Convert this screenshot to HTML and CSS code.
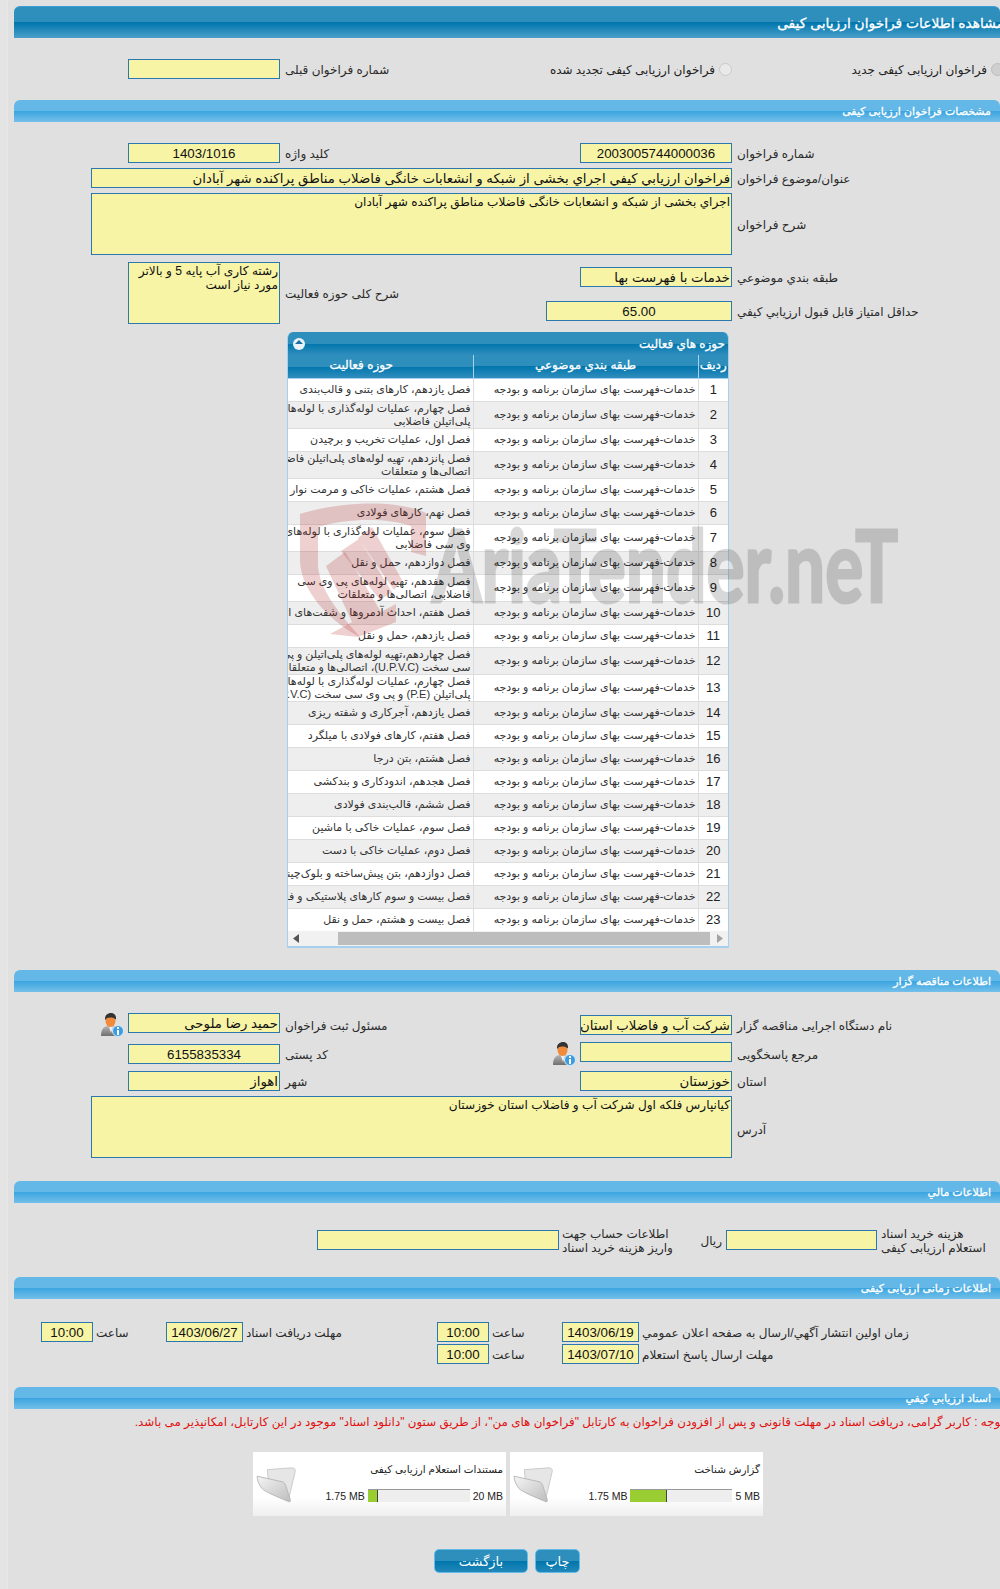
FILE: index.html
```html
<!DOCTYPE html>
<html lang="fa">
<head>
<meta charset="utf-8">
<title>مشاهده اطلاعات فراخوان ارزیابی کیفی</title>
<link rel="stylesheet" href="styles.css">
</head>
<body>
<main class="page">
  <h1 class="bar bar-main"><span class="bar-title">مشاهده اطلاعات فراخوان ارزیابی کیفی</span></h1>

  <section class="form form-top">
    <div class="field in-l"></div>
    <div class="label lb-l">شماره فراخوان قبلی</div>
    <div class="radio-line rad-mid"><span class="radio"></span><span>فراخوان ارزیابی کیفی تجدید شده</span></div>
    <div class="radio-line rad-right"><span class="radio radio-on"></span><span>فراخوان ارزیابی کیفی جدید</span></div>
  </section>

  <h2 class="bar bar-sub"><span>مشخصات فراخوان ارزیابی کیفی</span></h2>

  <section class="form form-spec">
    <div class="field in-l center r1">1403/1016</div>
    <div class="label lb-l r1">کلید واژه</div>
    <div class="field in-r center r1">2003005744000036</div>
    <div class="label lb-r r1">شماره فراخوان</div>

    <div class="field wide r2">فراخوان ارزيابي كيفي اجراي بخشی از شبکه و انشعابات خانگی فاضلاب مناطق پراکنده شهر آبادان</div>
    <div class="label lb-r r2">عنوان/موضوع فراخوان</div>

    <div class="field area wide r3">اجراي بخشی از شبکه و انشعابات خانگی فاضلاب مناطق پراکنده شهر آبادان</div>
    <div class="label lb-r r3">شرح فراخوان</div>

    <div class="field area area-small in-l r45">رشته کاری آب پایه 5 و بالاتر<br>مورد نیاز است</div>
    <div class="label lb-l r45 label-low">شرح کلی حوزه فعالیت</div>
    <div class="field in-r r4 push7">خدمات با فهرست بها</div>
    <div class="label lb-r r4 push7">طبقه بندي موضوعي</div>
    <div class="field in-mid center r5">65.00</div>
    <div class="label lb-r r5">حداقل امتياز قابل قبول ارزيابي كيفي</div>
  </section>

  <section class="panel">
    <div class="panel-head">
      <span class="panel-toggle"></span>
      <span class="panel-title">حوزه هاي فعاليت</span>
    </div>
    <div class="table-wrap">
      <table class="grid-table">
        <colgroup><col class="c-num"><col class="c-cat"><col class="c-act"></colgroup>
        <thead><tr><th>رديف</th><th>طبقه بندي موضوعي</th><th>حوزه فعاليت</th></tr></thead>
        <tbody>
          <tr><td class="n">1</td><td>خدمات-فهرست بهای سازمان برنامه و بودجه</td><td>فصل یازدهم، کارهای بتنی و قالب‌بندی</td></tr>
          <tr class="tall"><td class="n">2</td><td>خدمات-فهرست بهای سازمان برنامه و بودجه</td><td>فصل چهارم، عملیات لوله‌گذاری با لوله‌های<br>پلی‌اتیلن فاضلابی</td></tr>
          <tr><td class="n">3</td><td>خدمات-فهرست بهای سازمان برنامه و بودجه</td><td>فصل اول، عملیات تخریب و برچیدن</td></tr>
          <tr class="tall"><td class="n">4</td><td>خدمات-فهرست بهای سازمان برنامه و بودجه</td><td>فصل پانزدهم، تهیه لوله‌های پلی‌اتیلن فاضلابی،<br>اتصالی‌ها و متعلقات</td></tr>
          <tr><td class="n">5</td><td>خدمات-فهرست بهای سازمان برنامه و بودجه</td><td>فصل هشتم، عملیات خاکی و مرمت نوار</td></tr>
          <tr><td class="n">6</td><td>خدمات-فهرست بهای سازمان برنامه و بودجه</td><td>فصل نهم، کارهای فولادی</td></tr>
          <tr class="tall"><td class="n">7</td><td>خدمات-فهرست بهای سازمان برنامه و بودجه</td><td>فصل سوم، عملیات لوله‌گذاری با لوله‌های پی<br>وی سی فاضلابی</td></tr>
          <tr><td class="n">8</td><td>خدمات-فهرست بهای سازمان برنامه و بودجه</td><td>فصل دوازدهم، حمل و نقل</td></tr>
          <tr class="tall"><td class="n">9</td><td>خدمات-فهرست بهای سازمان برنامه و بودجه</td><td>فصل هفدهم، تهیه لوله‌های پی وی سی<br>فاضلابی، اتصالی‌ها و متعلقات</td></tr>
          <tr><td class="n">10</td><td>خدمات-فهرست بهای سازمان برنامه و بودجه</td><td>فصل هفتم، احداث آدمروها و شفت‌های انتقال</td></tr>
          <tr><td class="n">11</td><td>خدمات-فهرست بهای سازمان برنامه و بودجه</td><td>فصل یازدهم، حمل و نقل</td></tr>
          <tr class="tall"><td class="n">12</td><td>خدمات-فهرست بهای سازمان برنامه و بودجه</td><td>فصل چهاردهم،تهیه لوله‌های پلی‌اتیلن و پی وی<br>سی سخت (U.P.V.C)، اتصالی‌ها و متعلقات</td></tr>
          <tr class="tall"><td class="n">13</td><td>خدمات-فهرست بهای سازمان برنامه و بودجه</td><td>فصل چهارم، عملیات لوله‌گذاری با لوله‌های<br>پلی‌اتیلن (P.E) و پی وی سی سخت (U.P.V.C)</td></tr>
          <tr><td class="n">14</td><td>خدمات-فهرست بهای سازمان برنامه و بودجه</td><td>فصل یازدهم، آجرکاری و شفته ریزی</td></tr>
          <tr><td class="n">15</td><td>خدمات-فهرست بهای سازمان برنامه و بودجه</td><td>فصل هفتم، کارهای فولادی با میلگرد</td></tr>
          <tr><td class="n">16</td><td>خدمات-فهرست بهای سازمان برنامه و بودجه</td><td>فصل هشتم، بتن درجا</td></tr>
          <tr><td class="n">17</td><td>خدمات-فهرست بهای سازمان برنامه و بودجه</td><td>فصل هجدهم، اندودکاری و بندکشی</td></tr>
          <tr><td class="n">18</td><td>خدمات-فهرست بهای سازمان برنامه و بودجه</td><td>فصل ششم، قالب‌بندی فولادی</td></tr>
          <tr><td class="n">19</td><td>خدمات-فهرست بهای سازمان برنامه و بودجه</td><td>فصل سوم، عملیات خاکی با ماشین</td></tr>
          <tr><td class="n">20</td><td>خدمات-فهرست بهای سازمان برنامه و بودجه</td><td>فصل دوم، عملیات خاکی با دست</td></tr>
          <tr><td class="n">21</td><td>خدمات-فهرست بهای سازمان برنامه و بودجه</td><td>فصل دوازدهم، بتن پیش‌ساخته و بلوک‌چینی</td></tr>
          <tr><td class="n">22</td><td>خدمات-فهرست بهای سازمان برنامه و بودجه</td><td>فصل بیست و سوم کارهای پلاستیکی و فلزی</td></tr>
          <tr><td class="n">23</td><td>خدمات-فهرست بهای سازمان برنامه و بودجه</td><td>فصل بیست و هشتم، حمل و نقل</td></tr>
        </tbody>
      </table>
    </div>
    <div class="hscroll">
      <svg class="arrow" width="7" height="9" viewBox="0 0 7 9"><path d="M6 0v9L0 4.500z" fill="#555"/></svg>
      <span class="thumb"></span>
      <svg class="arrow" width="7" height="9" viewBox="0 0 7 9"><path d="M1 0v9l6-4.500z" fill="#a3a3a3"/></svg>
    </div>
  </section>

  <h2 class="bar bar-sub bar-gap"><span>اطلاعات مناقصه گزار</span></h2>

  <section class="form form-org">
    <svg class="user ic-l r1" width="24" height="24" viewBox="0 0 24 24"><use href="#user-info"/></svg>
    <div class="field in-l r1">حمید رضا ملوحی</div>
    <div class="label lb-l r1 label-nudge">مسئول ثبت فراخوان</div>
    <div class="field in-r r1 push2">شرکت آب و فاضلاب استان</div>
    <div class="label lb-r r1 label-nudge">نام دستگاه اجرایی مناقصه گزار</div>

    <div class="field in-l center r2 push2">6155835334</div>
    <div class="label lb-l r2 label-nudge">کد پستی</div>
    <svg class="user ic-r r2" width="24" height="24" viewBox="0 0 24 24"><use href="#user-info"/></svg>
    <div class="field in-r r2"></div>
    <div class="label lb-r r2 label-nudge">مرجع پاسخگویی</div>

    <div class="field in-l r3">اهواز</div>
    <div class="label lb-l r3">شهر</div>
    <div class="field in-r r3">خوزستان</div>
    <div class="label lb-r r3">استان</div>

    <div class="field area wide r4">کیانپارس فلکه اول شرکت آب و فاضلاب استان خوزستان</div>
    <div class="label lb-r r4">آدرس</div>
  </section>

  <h2 class="bar bar-sub bar-gap-21"><span>اطلاعات مالي</span></h2>

  <section class="form-fin">
    <div class="field fin-account"></div>
    <div class="fin-mid">
      <div class="label two-line">اطلاعات حساب جهت<br>واریز هزینه خرید اسناد</div>
      <div class="label rial">ریال</div>
    </div>
    <div class="field fin-cost"></div>
    <div class="label two-line fin-label">هزینه خرید اسناد<br>استعلام ارزیابی کیفی</div>
  </section>

  <h2 class="bar bar-sub bar-gap-27"><span>اطلاعات زمانی ارزیابی کیفی</span></h2>

  <section class="form-time">
    <div class="field center time">10:00</div>
    <div class="label">ساعت</div>
    <div class="field center date">1403/06/27</div>
    <div class="label">مهلت دریافت اسناد</div>
    <div class="field center time">10:00</div>
    <div class="label">ساعت</div>
    <div class="field center date">1403/06/19</div>
    <div class="label">زمان اولین انتشار آگهي/ارسال به صفحه اعلان عمومي</div>

    <div class="t-skip"></div>
    <div class="field center time">10:00</div>
    <div class="label">ساعت</div>
    <div class="field center date">1403/07/10</div>
    <div class="label">مهلت ارسال پاسخ استعلام</div>
  </section>

  <h2 class="bar bar-sub bar-gap-23"><span>اسناد ارزیابي کیفي</span></h2>

  <p class="notice">توجه : کاربر گرامی، دریافت اسناد در مهلت قانونی و پس از افزودن فراخوان به کارتابل "فراخوان های من"، از طریق ستون "دانلود اسناد" موجود در این کارتابل، امکانپذیر می باشد.</p>

  <section class="cards">
    <article class="card">
      <div class="card-body">
        <div class="card-title">گزارش شناخت</div>
        <div class="meter-line">
          <span class="mb">5 MB</span>
          <span class="meter"><span class="meter-fill" style="width:37px"></span></span>
          <span class="mb">1.75 MB</span>
        </div>
      </div>
      <svg class="folder" width="41" height="37" viewBox="0 0 44 40"><use href="#folder"/></svg>
    </article>
    <article class="card">
      <div class="card-body">
        <div class="card-title">مستندات استعلام ارزیابی کیفی</div>
        <div class="meter-line">
          <span class="mb">20 MB</span>
          <span class="meter"><span class="meter-fill" style="width:10px"></span></span>
          <span class="mb">1.75 MB</span>
        </div>
      </div>
      <svg class="folder" width="41" height="37" viewBox="0 0 44 40"><use href="#folder"/></svg>
    </article>
  </section>

  <div class="actions">
    <a class="btn btn-back">بازگشت</a>
    <a class="btn btn-print">چاپ</a>
  </div>
</main>

<svg class="watermark" width="1000" height="170" viewBox="0 490 1000 170" aria-hidden="true">
  <path class="wm-red" d="M300 514C335 503 392 498 426 513L426 556 411 552 411 526C384 517 345 519 318 527L318 566C320 592 342 616 360 637 330 622 300 590 300 560Z"/>
  <path class="wm-red" d="M326 566L345 552 381 612 396 604 396 622 358 637 330 634 352 622Z"/>
  <path class="wm-red" d="M341 551L359 539 392 592 380 600Z"/>
  <path class="wm-red" d="M358 538L372 527 402 580 394 590Z"/>
  <text class="wm-text" x="432" y="602" textLength="466" lengthAdjust="spacingAndGlyphs">AriaTender.neT</text>
</svg>

<svg class="defs" width="0" height="0" aria-hidden="true">
  <defs>
    <linearGradient id="suit" x1="0" y1="0" x2="0" y2="1"><stop offset="0" stop-color="#b5b5b5"/><stop offset="1" stop-color="#6f6f6f"/></linearGradient>
    <linearGradient id="foldg" x1="0" y1="0" x2="1" y2="1"><stop offset="0" stop-color="#f5f5f5"/><stop offset="1" stop-color="#bdbdbd"/></linearGradient>
    <symbol id="user-info" viewBox="0 0 24 24">
      <path d="M1 23c0-6 2-9 6-10l4 1 4-1c3 1 5 4 5 10z" fill="url(#suit)"/>
      <path d="M9 14l2 6 2-6z" fill="#eee"/>
      <ellipse cx="10.500" cy="8" rx="5" ry="6" fill="#f28a3c"/>
      <path d="M5 7C4.500 2 8 0 11 0s5.500 2 5 6.500C14 4 9 4 7 5z" fill="#333"/>
      <circle cx="18" cy="18" r="5.500" fill="#3d9be0" stroke="#d7ecfb"/>
      <rect x="17" y="17" width="2" height="5" fill="#fff"/>
      <rect x="17" y="14" width="2" height="2" fill="#fff"/>
    </symbol>
    <symbol id="folder" viewBox="0 0 44 40">
      <path d="M12 4L38 2c4 0 5 2 4 5L35 36 14 22z" fill="#e6e6e6" stroke="#c8c8c8"/>
      <path d="M1 11L28 17c2 0 3 2 4 4l5 16c0 2-1 2-3 1C22 33 10 28 6 24 3 20 1 15 1 11z" fill="url(#foldg)" stroke="#b5b5b5"/>
    </symbol>
  </defs>
</svg>
</body>
</html>
```

FILE: styles.css
```css
html, body { margin: 0; padding: 0; height: 1589px; overflow: hidden; }
body {
  background: #e4e4e4;
  font-family: "Liberation Sans", "DejaVu Sans", sans-serif;
  font-size: 12px;
  color: #222;
  position: relative;
}
.page {
  margin-left: 7px;
  padding: 6px 0 0 6px;
  height: 1583px;
  background: #e0e0e0;
  border-left: 1px solid #e8e8e8;
  overflow: hidden;
}
.defs { position: absolute; }

/* header bars */
.bar {
  margin: 0;
  direction: rtl;
  color: #fff;
  font-weight: normal;
  -webkit-text-stroke: 0.3px #fff;
  border-top-left-radius: 6px;
  border-top-right-radius: 6px;
}
.bar-main {
  height: 32px;
  line-height: 34px;
  font-size: 13.800px;
  background: linear-gradient(#2e8fbd 0, #2e8fbd 50%, #0076ad 50%, #4a9fc9 100%);
  border-top: 1px solid #3b9ed4;
  box-sizing: border-box;
}
.bar-title { margin-right: -4px; white-space: nowrap; }
.bar-sub {
  height: 22px;
  line-height: 23px;
  font-size: 11px;
  padding-right: 9px;
  background: linear-gradient(#63b8e8 0, #63b8e8 50%, #3aa4df 50%, #74c0ea 100%);
  margin-top: 21px;
}
.bar-gap { margin-top: 22px; }
.bar-gap-21 { margin-top: 21px; }
.bar-gap-23 { margin-top: 23px; }
.bar-gap-27 { margin-top: 27px; }

/* form grid */
.form {
  display: grid;
  grid-template-columns: 77px 37px 152px 266px 34px 152px 268px;
  margin-top: 21px;
}
.form-top { grid-template-rows: 20px; }
.form-spec { grid-template-rows: 20px 20px 62px 36px 20px; row-gap: 5px; }
.form-org { grid-template-rows: 22px 22px 20px 62px; row-gap: 7px; }
.form-org .r4 { margin-top: -2px; height: 62px; }

.r1 { grid-row: 1; }
.r2 { grid-row: 2; }
.r3 { grid-row: 3; }
.r4 { grid-row: 4; }
.r5 { grid-row: 5; }
.r45 { grid-row: 4 / 6; }
.in-l { grid-column: 3; }
.lb-l { grid-column: 4; }
.in-r { grid-column: 6; }
.lb-r { grid-column: 7; }
.wide { grid-column: 2 / 7; }
.in-mid { grid-column: 5 / 7; }
.ic-l { grid-column: 2; justify-self: end; margin: 0 4px 0 0; }
.ic-r { grid-column: 5; justify-self: end; margin: 0 4px 0 0; }

.field {
  box-sizing: border-box;
  height: 20px;
  background: #f7f4a6;
  border: 1px solid #2b78ae;
  direction: rtl;
  padding: 0 1px;
  font-size: 13.300px;
  line-height: 19px;
  color: #111;
  white-space: nowrap;
  overflow: hidden;
  align-self: start;
}
.center { text-align: center; }
.area { height: 62px; white-space: normal; font-size: 12.100px; line-height: 14px; padding-top: 1px; }
.area-small { margin-top: 2px; }
.push2 { margin-top: 2px; }
.push7 { margin-top: 7px; }

.label {
  direction: rtl;
  text-align: left;
  white-space: nowrap;
  padding-left: 5px;
  padding-top: 1px;
  line-height: 20px;
  color: #2b2b2b;
  align-self: start;
}
.form .field + .label { justify-self: start; padding-left: 0; margin-left: 5px; }
.r3.label { align-self: center; }
.label-low { align-self: end; margin-bottom: 17px; }
.label-nudge { margin-top: 2px; }
.form-org .r4.label { align-self: center; margin-top: 0; height: auto; }

/* radios */
.radio-line {
  display: flex;
  direction: rtl;
  align-items: center;
  gap: 4px;
  white-space: nowrap;
  height: 20px;
  grid-row: 1;
  padding-top: 1px;
}
.rad-mid { grid-column: 5 / 7; }
.rad-right { grid-column: 7; margin-right: -4px; }
.radio {
  width: 11px;
  height: 11px;
  flex: none;
  border-radius: 50%;
  border: 1px solid #c9c9c9;
  background: #e9e9e9;
  margin-top: -2px;
}
.radio-on { background: #cfcfcf; border-color: #bdbdbd; }

/* panel */
.panel {
  width: 442px;
  margin: 11px 0 0 273px;
  box-sizing: border-box;
  height: 616px;
  border-left: 1px solid #a7d0ee;
  border-right: 1px solid #a7d0ee;
  border-bottom: 2px solid #a7d0ee;
  border-top-left-radius: 6px;
  border-top-right-radius: 6px;
  overflow: hidden;
}
.panel-head {
  height: 23px;
  display: flex;
  justify-content: space-between;
  align-items: center;
  padding: 0 3px 0 5px;
  background: linear-gradient(#2e8fbd 0, #2e8fbd 50%, #0076ad 50%, #2f8dbd 100%);
  color: #fff;
  -webkit-text-stroke: 0.3px #fff;
}
.panel-title { direction: rtl; }
.panel-toggle {
  width: 12px;
  height: 12px;
  border-radius: 50%;
  background: #e8f3f9;
  position: relative;
}
.panel-toggle::after {
  content: "";
  position: absolute;
  left: 2px;
  top: 2px;
  border: 4px solid transparent;
  border-top: 0;
  border-bottom: 4px solid #1c6f9f;
}
.table-wrap { height: 576px; overflow: hidden; direction: rtl; background: #fff; }
.grid-table {
  width: 478px;
  border-collapse: collapse;
  table-layout: fixed;
  direction: rtl;
}
.c-num { width: 30px; }
.c-cat { width: 225px; }
.c-act { width: 223px; }
.grid-table th {
  height: 23px;
  box-sizing: border-box;
  padding: 0 0 3px;
  color: #fff;
  font-size: 12px;
  font-weight: normal;
  -webkit-text-stroke: 0.3px #fff;
  background: linear-gradient(#2e8fbd 0, #2e8fbd 50%, #0076ad 50%, #2f8dbd 100%);
  border-left: 1px solid #a7d0ee;
  border-bottom: 1px solid #a7d0ee;
  white-space: nowrap;
}
.grid-table th:last-child { border-left: 0; }
.grid-table td {
  height: 23px;
  box-sizing: border-box;
  padding: 0 2px;
  font-size: 11px;
  line-height: 13px;
  white-space: nowrap;
  overflow: hidden;
  text-align: right;
  color: #333;
  border-left: 1px solid #ddd;
  border-bottom: 1px solid #ddd;
}
.grid-table td:last-child { border-left: 0; }
.grid-table td.n { text-align: center; font-size: 13px; color: #222; }
.grid-table tr.tall td { height: 27px; }
.grid-table tbody tr:nth-child(even) td { background: #eee; }
.hscroll {
  height: 15px;
  display: flex;
  align-items: center;
  justify-content: space-between;
  background: #f1f1f1;
  padding: 0 5px;
}
.thumb { width: 372px; height: 13px; background: #bdbdbd; margin-left: 33px; margin-right: 1px; }

/* finance */
.form-fin {
  display: grid;
  grid-template-columns: 303px 242px 167px 151px 1fr;
  margin-top: 27px;
  height: 20px;
}
.form-fin .field { grid-row: 1; }
.fin-account { grid-column: 2; }
.fin-cost { grid-column: 4; }
.fin-mid { grid-column: 3; display: flex; justify-content: space-between; padding-right: 4px; }
.two-line { line-height: 14px; margin-top: -4px; padding-left: 3px; }
.fin-mid .two-line { padding-left: 3px; }
.rial { padding: 0; line-height: 22px; }
.fin-label { grid-column: 5; padding-left: 4px; }

/* time */
.form-time {
  display: grid;
  grid-template-columns: 27px 52px 73px 77px 194px 52px 73px 77px 1fr;
  grid-template-rows: 20px 20px;
  row-gap: 2px;
  margin-top: 23px;
}
.form-time > :first-child { grid-column: 2; }
.form-time .t-skip { grid-column: 1 / 6; }
.form-time .label { padding-left: 3px; line-height: 21px; }

/* notice */
.notice {
  margin: 5px -4px 0 0;
  height: 16px;
  line-height: 16px;
  direction: rtl;
  white-space: nowrap;
  color: #e01010;
  font-size: 11.900px;
}

/* cards */
.cards {
  display: flex;
  flex-direction: row-reverse;
  justify-content: flex-end;
  gap: 4px;
  margin: 22px 0 0 239px;
  width: 510px;
}
.card {
  width: 253px;
  height: 64px;
  flex: none;
  display: flex;
  flex-direction: row-reverse;
  justify-content: space-between;
  background: linear-gradient(#fff 0, #fff 70%, #efefef 100%);
}
.folder { margin: 14px 0 0 3px; }
.card-body { display: flex; flex-direction: column; align-items: flex-end; padding: 11px 3px 0 0; }
.card-title { direction: rtl; font-size: 10.400px; line-height: 13px; color: #222; }
.meter-line { display: flex; flex-direction: row-reverse; align-items: center; gap: 3px; margin-top: 13px; font-size: 10.500px; color: #222; }
.meter {
  width: 102px;
  height: 13px;
  background: #eee;
  border-top: 1px solid #999;
  box-sizing: border-box;
  display: block;
}
.meter-fill {
  display: block;
  height: 12px;
  background: #9acd32;
  border-right: 1px solid #444;
  box-sizing: border-box;
}

/* buttons */
.actions { display: flex; gap: 7px; margin: 33px 0 0 420px; }
.btn {
  box-sizing: border-box;
  height: 24px;
  border: 1px solid #63bce8;
  border-radius: 5px;
  color: #fff;
  font-size: 13px;
  line-height: 24px;
  text-align: center;
  direction: rtl;
  background: linear-gradient(#2e8fbd 0, #2e8fbd 52%, #0076ad 52%, #2388ba 100%);
}
.btn-back { width: 94px; }
.btn-print { width: 45px; }

/* watermark */
.watermark { position: absolute; left: 0; top: 490px; pointer-events: none; }
.wm-red { fill: rgba(170, 20, 20, 0.2); }
.wm-text { fill: #000; stroke: #000; stroke-width: 3px; opacity: 0.15; font-family: "Lato", "DejaVu Sans", sans-serif; font-weight: 700; font-size: 100px; }
```
